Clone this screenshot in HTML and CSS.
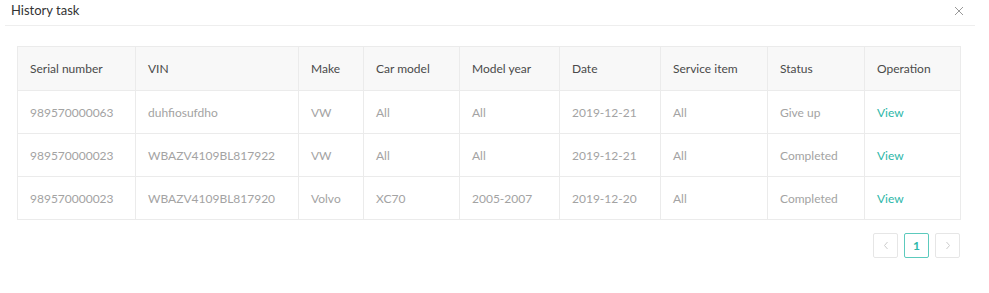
FILE: index.html
```html
<!DOCTYPE html>
<html lang="en">
<head>
  <meta charset="UTF-8">
  <title>History task</title>
  <link rel="stylesheet" href="styles.css">
</head>
<body>
  <div class="dialog">
    <!-- Dialog header -->
    <div class="dialog-header">
      <span class="dialog-title">History task</span>
      <span class="dialog-close">
        <svg width="10" height="10" viewBox="0 0 10 10"><path d="M1 1L9 9M9 1L1 9" stroke="#999" stroke-width="1" fill="none"/></svg>
      </span>
    </div>

    <!-- Task table -->
    <div class="dialog-body">
      <table class="task-table">
        <colgroup>
          <col style="width:118px">
          <col style="width:163px">
          <col style="width:65px">
          <col style="width:96px">
          <col style="width:100px">
          <col style="width:101px">
          <col style="width:107px">
          <col style="width:97px">
          <col style="width:96px">
        </colgroup>
        <thead>
          <tr>
            <th>Serial number</th>
            <th>VIN</th>
            <th>Make</th>
            <th>Car model</th>
            <th>Model year</th>
            <th>Date</th>
            <th>Service item</th>
            <th>Status</th>
            <th>Operation</th>
          </tr>
        </thead>
        <tbody>
          <tr>
            <td>989570000063</td>
            <td>duhfiosufdho</td>
            <td>VW</td>
            <td>All</td>
            <td>All</td>
            <td>2019-12-21</td>
            <td>All</td>
            <td>Give up</td>
            <td><a class="view-link" href="#">View</a></td>
          </tr>
          <tr>
            <td>989570000023</td>
            <td>WBAZV4109BL817922</td>
            <td>VW</td>
            <td>All</td>
            <td>All</td>
            <td>2019-12-21</td>
            <td>All</td>
            <td>Completed</td>
            <td><a class="view-link" href="#">View</a></td>
          </tr>
          <tr>
            <td>989570000023</td>
            <td>WBAZV4109BL817920</td>
            <td>Volvo</td>
            <td>XC70</td>
            <td>2005-2007</td>
            <td>2019-12-20</td>
            <td>All</td>
            <td>Completed</td>
            <td><a class="view-link" href="#">View</a></td>
          </tr>
        </tbody>
      </table>

      <!-- Pagination -->
      <div class="pager">
        <span class="pager-btn">
          <svg width="6" height="9" viewBox="0 0 6 9"><path d="M4.5 1L1.5 4.5L4.5 8" stroke="#ccc" fill="none"/></svg>
        </span>
        <span class="pager-btn active">1</span>
        <span class="pager-btn">
          <svg width="6" height="9" viewBox="0 0 6 9"><path d="M1.5 1L4.5 4.5L1.5 8" stroke="#ccc" fill="none"/></svg>
        </span>
      </div>
    </div>
  </div>
</body>
</html>
```
FILE: styles.css
```css
body {
  margin: 0;
  background: #fff;
  font-family: Lato, "Open Sans", sans-serif;
  font-size: 12px;
  color: #999;
}
.dialog {
  width: 989px;
  height: 293px;
}
.dialog-header {
  margin: 0 14px 0 5px;
  height: 26px;
  border-bottom: 1px solid #eeeeee;
  display: flex;
  align-items: center;
  justify-content: space-between;
  padding: 0 11px 0 6px;
  box-sizing: border-box;
}
.dialog-title {
  font-size: 13px;
  color: #333;
  margin-top: -5px;
}
.dialog-close {
  display: flex;
  margin-top: -4px;
}
.dialog-body {
  padding: 20px 29px 0 17px;
}
.task-table {
  width: 943px;
  table-layout: fixed;
  border-collapse: collapse;
}
.task-table th,
.task-table td {
  border: 1px solid #ebebeb;
  padding: 0 12px;
  text-align: left;
  white-space: nowrap;
}
.task-table th {
  height: 43px;
  background: #f8f8f8;
  font-weight: normal;
  color: #4a4a4a;
}
.task-table td {
  height: 42px;
  color: #a3a3a3;
}
.view-link {
  color: #2db7a8;
  text-decoration: none;
}
.pager {
  display: flex;
  justify-content: flex-end;
  gap: 6px;
  margin-top: 13px;
}
.pager-btn {
  width: 25px;
  height: 25px;
  box-sizing: border-box;
  border: 1px solid #e6e6e6;
  border-radius: 2px;
  display: flex;
  align-items: center;
  justify-content: center;
  font-size: 12px;
  color: #ccc;
}
.pager-btn.active {
  border-color: #5ccabd;
  color: #2db7a8;
  font-weight: bold;
}
```
